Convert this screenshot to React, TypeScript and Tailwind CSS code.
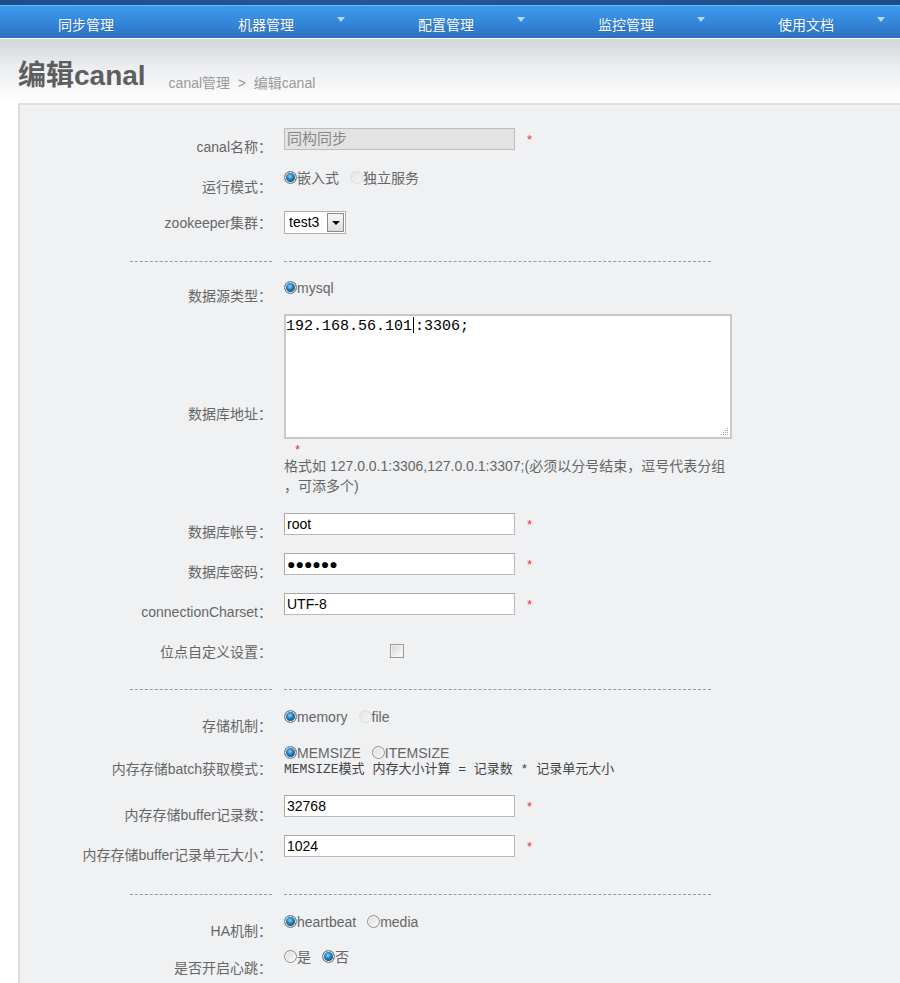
const sans = "[font-family:'Liberation_Sans','Noto_Sans_CJK_SC',sans-serif]";
const mono = "[font-family:'Liberation_Mono','Noto_Sans_CJK_SC',monospace]";

const navItems = [
  { label: '同步管理', arrow: false },
  { label: '机器管理', arrow: true },
  { label: '配置管理', arrow: true },
  { label: '监控管理', arrow: true },
  { label: '使用文档', arrow: true },
];

function Radio({
  checked,
  label,
  faded,
}: {
  checked?: boolean;
  label: string;
  faded?: boolean;
}) {
  return (
    <span className="inline-flex items-center">
      {checked ? (
        <span className="mb-[2px] inline-block h-[13px] w-[13px] rounded-full border border-[#7a7a7a] bg-[radial-gradient(circle_at_45%_40%,#8fd3f5_0%,#1d7fc0_35%,#0b3f6e_75%,#0b3f6e_100%)] shadow-[inset_0_0_0_1px_#e8e8e8]" />
      ) : faded ? (
        <span className="mb-[2px] inline-block h-[13px] w-[13px] rounded-full border border-[#dcdcdc] bg-[linear-gradient(135deg,#e2e2e2,#f7f7f7)]" />
      ) : (
        <span className="mb-[2px] inline-block h-[13px] w-[13px] rounded-full border border-[#8e8e8e] bg-[linear-gradient(135deg,#dcdcdc,#fbfbfb)] shadow-[inset_0_0_0_1px_#f4f4f4]" />
      )}
      <span className="text-[14px] leading-[18px] text-[#666]">{label}</span>
    </span>
  );
}

function Star() {
  return (
    <span className="ml-[12px] mt-[4px] text-[13px] leading-4 text-[#ee3333]">
      *
    </span>
  );
}

function TextInput({ value, disabled }: { value: string; disabled?: boolean }) {
  return (
    <div
      className={
        disabled
          ? 'flex h-[22px] w-[231px] items-center border border-[#bdbdbd] bg-[#e3e3e3] pl-[2px] text-[15px] text-[#888]'
          : 'flex h-[22px] w-[231px] items-center border border-[#b8b8b8] border-t-[#a9a9a9] border-l-[#a9a9a9] bg-white pl-[2px] text-[14px] text-black'
      }
    >
      {value}
    </div>
  );
}

function Label({ text, pt }: { text: string; pt: string }) {
  return (
    <div
      className={`w-[252px] shrink-0 text-right text-[14px] leading-5 text-[#666] ${pt}`}
    >
      {text}
    </div>
  );
}

function Divider({ h, pt }: { h: string; pt: string }) {
  return (
    <div className={`flex items-start ${h} ${pt}`}>
      <div className="flex w-[254px] shrink-0 justify-end pr-[2px]">
        <div className="w-[142px] border-t border-dashed border-[#8f9cab]" />
      </div>
      <div className="ml-[10px] w-[427px] border-t border-dashed border-[#8f9cab]" />
    </div>
  );
}

export default function App() {
  return (
    <div className={`min-h-[983px] w-[900px] overflow-hidden bg-white ${sans}`}>
      {/* 顶部导航 */}
      <div className="h-[5px] bg-[linear-gradient(90deg,#1b4f8c,#22589a_40%,#1c4d88)]" />
      <div className="h-px bg-[#6cb6f2]" />
      <div className="flex h-[32px] bg-[linear-gradient(180deg,#3c9ced_0%,#3385d8_55%,#2d6fc1_100%)]">
        {navItems.map((item) => (
          <div key={item.label} className="flex w-[180px] shrink-0 items-start">
            <span className="mt-[10px] w-[152px] pl-[20px] text-center text-[14px] leading-[18px] text-white [text-shadow:0_0_1px_rgba(0,0,0,0.3)]">
              {item.label}
            </span>
            {item.arrow && (
              <span className="ml-[5px] mt-[11px] h-0 w-0 border-x-[4px] border-t-[5px] border-x-transparent border-t-[#b9d8f5]" />
            )}
          </div>
        ))}
      </div>
      <div className="h-px bg-white" />

      {/* 标题 */}
      <div className="flex h-[64px] items-baseline bg-[linear-gradient(180deg,#d2d5da_0%,#eceef1_45%,#ffffff_100%)] pl-[18px] pt-[20px]">
        <h1 className="text-[28px] font-bold leading-[34px] text-[#5e5e5e]">
          编辑canal
        </h1>
        <span className="relative top-[3px] ml-[23px] whitespace-pre text-[14px] text-[#9a9a9a]">
          {'canal管理  >  编辑canal'}
        </span>
      </div>

      {/* 表单 */}
      <div className="ml-[18px] border-l-2 border-t-2 border-[#dedede] bg-[#f0f1f3] pt-[18px]">
        <div className="flex h-[40px] items-start">
          <Label text="canal名称：" pt="pt-[14px]" />
          <div className="ml-[12px] flex items-start pt-[5px]">
            <TextInput value="同构同步" disabled />
            <Star />
          </div>
        </div>

        <div className="flex h-[40px] items-start">
          <Label text="运行模式：" pt="pt-[14px]" />
          <div className="ml-[12px] flex items-start gap-[11px] pt-[6px]">
            <Radio checked label="嵌入式" />
            <Radio faded label="独立服务" />
          </div>
        </div>

        <div className="flex h-[44px] items-start">
          <Label text="zookeeper集群：" pt="pt-[10px]" />
          <div className="ml-[12px] pt-[8px]">
            <div className="flex h-[23px] w-[62px] items-center justify-between border border-[#b0b0b0] bg-white pl-[4px] pr-[1px]">
              <span className="text-[14px] text-black">test3</span>
              <span className="flex h-[19px] w-[17px] items-center justify-center border border-[#8a8a8a] bg-[linear-gradient(180deg,#f6f6f6,#dcdcdc)]">
                <span className="h-0 w-0 border-x-[4px] border-t-[4px] border-x-transparent border-t-black" />
              </span>
            </div>
          </div>
        </div>

        <Divider h="h-[28px]" pt="pt-[14px]" />

        <div className="flex h-[36px] items-start">
          <Label text="数据源类型：" pt="pt-[11px]" />
          <div className="ml-[12px] flex items-start pt-[4px]">
            <Radio checked label="mysql" />
          </div>
        </div>

        <div className="flex h-[197px] items-start">
          <Label text="数据库地址：" pt="pt-[93px]" />
          <div className="ml-[12px] pt-[3px]">
            <div className="relative h-[125px] w-[448px] border-2 border-[#c8c8c8] bg-white px-0 py-[1px]">
              <div className={`text-[15px] leading-5 text-black ${mono}`}>
                192.168.56.101
                <span className="mx-[1px] inline-block h-[16px] w-px bg-black align-[-3px]" />
                :3306;
              </div>
              <svg
                className="absolute bottom-[1px] right-[1px]"
                width="9"
                height="9"
                viewBox="0 0 9 9"
              >
                <g fill="#a0a0a0">
                  <rect x="7" y="1" width="1" height="1" />
                  <rect x="5" y="3" width="1" height="1" />
                  <rect x="7" y="3" width="1" height="1" />
                  <rect x="3" y="5" width="1" height="1" />
                  <rect x="5" y="5" width="1" height="1" />
                  <rect x="7" y="5" width="1" height="1" />
                  <rect x="1" y="7" width="1" height="1" />
                  <rect x="3" y="7" width="1" height="1" />
                  <rect x="5" y="7" width="1" height="1" />
                  <rect x="7" y="7" width="1" height="1" />
                </g>
              </svg>
            </div>
            <div className="ml-[11px] mt-[3px] h-[13px] text-[13px] leading-4 text-[#ee3333]">
              *
            </div>
            <div className="mt-[1px] whitespace-nowrap text-[14px] leading-5 text-[#666]">
              格式如 127.0.0.1:3306,127.0.0.1:3307;(必须以分号结束，逗号代表分组
              <br />
              ，可添多个)
            </div>
          </div>
        </div>

        <div className="flex h-[40px] items-start">
          <Label text="数据库帐号：" pt="pt-[14px]" />
          <div className="ml-[12px] flex items-start pt-[5px]">
            <TextInput value="root" />
            <Star />
          </div>
        </div>

        <div className="flex h-[40px] items-start">
          <Label text="数据库密码：" pt="pt-[14px]" />
          <div className="ml-[12px] flex items-start pt-[5px]">
            <TextInput value="●●●●●●" />
            <Star />
          </div>
        </div>

        <div className="flex h-[40px] items-start">
          <Label text="connectionCharset：" pt="pt-[14px]" />
          <div className="ml-[12px] flex items-start pt-[5px]">
            <TextInput value="UTF-8" />
            <Star />
          </div>
        </div>

        <div className="flex h-[40px] items-start">
          <Label text="位点自定义设置：" pt="pt-[14px]" />
          <div className="ml-[118px] pt-[16px]">
            <span className="block h-[14px] w-[14px] border border-[#9a9a9a] bg-[linear-gradient(135deg,#d6d6d6,#fdfdfd)] shadow-[inset_0_0_0_1px_#f2f2f2]" />
          </div>
        </div>

        <Divider h="h-[35px]" pt="pt-[21px]" />

        <div className="flex h-[40px] items-start">
          <Label text="存储机制：" pt="pt-[13px]" />
          <div className="ml-[12px] flex items-start gap-[11px] pt-[5px]">
            <Radio checked label="memory" />
            <Radio faded label="file" />
          </div>
        </div>

        <div className="flex h-[47px] items-start">
          <Label text="内存存储batch获取模式：" pt="pt-[16px]" />
          <div className="ml-[12px] pt-[1px]">
            <div className="flex items-start gap-[11px]">
              <Radio checked label="MEMSIZE" />
              <Radio label="ITEMSIZE" />
            </div>
            <div className={`mt-0 text-[13px] leading-4 text-[#444] ${mono}`}>
              MEMSIZE模式 内存大小计算 = 记录数 * 记录单元大小
            </div>
          </div>
        </div>

        <div className="flex h-[40px] items-start">
          <Label text="内存存储buffer记录数：" pt="pt-[15px]" />
          <div className="ml-[12px] flex items-start pt-[5px]">
            <TextInput value="32768" />
            <Star />
          </div>
        </div>

        <div className="flex h-[40px] items-start">
          <Label text="内存存储buffer记录单元大小：" pt="pt-[15px]" />
          <div className="ml-[12px] flex items-start pt-[5px]">
            <TextInput value="1024" />
            <Star />
          </div>
        </div>

        <Divider h="h-[38px]" pt="pt-[24px]" />

        <div className="flex h-[40px] items-start">
          <Label text="HA机制：" pt="pt-[13px]" />
          <div className="ml-[12px] flex items-start gap-[11px] pt-[5px]">
            <Radio checked label="heartbeat" />
            <Radio label="media" />
          </div>
        </div>

        <div className="flex h-[40px] items-start">
          <Label text="是否开启心跳：" pt="pt-[10px]" />
          <div className="ml-[12px] flex items-start gap-[11px] pt-0">
            <Radio label="是" />
            <Radio checked label="否" />
          </div>
        </div>
      </div>
    </div>
  );
}
